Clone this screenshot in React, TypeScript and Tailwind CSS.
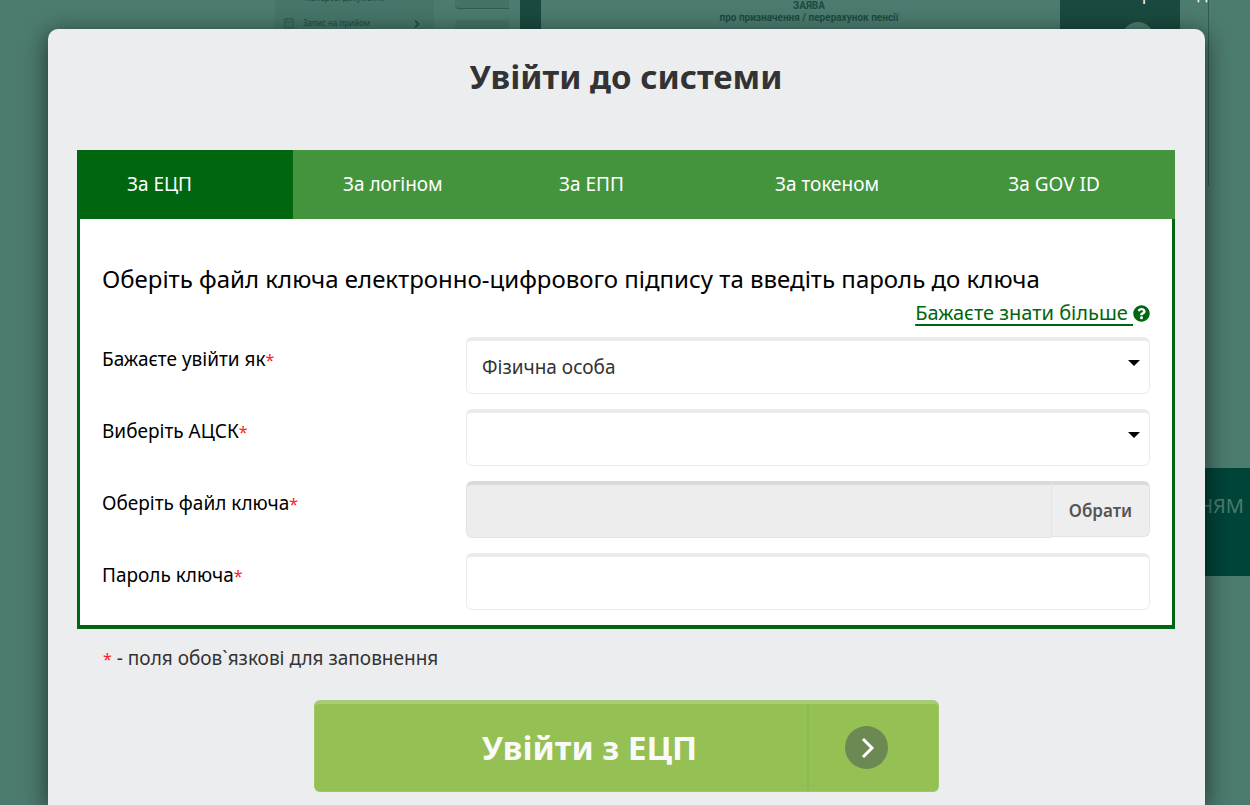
import { useState } from "react";
import type { ReactNode } from "react";
import { CalendarDays, ChevronRight } from "lucide-react";
import { FaQuestionCircle } from "react-icons/fa";

const TABS = ["За ЕЦП", "За логіном", "За ЕПП", "За токеном", "За GOV ID"];

const FIELD =
  "h-[57px] w-full appearance-none rounded-md border border-t-4 border-[#ebebeb] bg-white px-[15px] text-[19px] text-[#333] outline-none";

export default function App() {
  return (
    <div className="relative flex min-h-screen flex-col overflow-hidden bg-[#4c7b6f] pt-[29px] pr-[45px] pl-12 font-['Noto_Sans',sans-serif]">
      <PageBackdrop />
      <LoginDialog />
    </div>
  );
}

/* The dimmed page that shows around the edges of the dialog */
function PageBackdrop() {
  return (
    <div className="absolute inset-0 overflow-hidden text-[#1c4b41]" aria-hidden="true">
      <div className="absolute top-0 left-[275px] h-10 w-[159px] bg-[#47756a] text-[8px] leading-3">
        <span className="absolute -top-2 left-[30px] whitespace-nowrap">Паперові документи</span>
        <CalendarDays className="absolute top-[17px] left-2 h-3 w-3 text-[#315f54]" />
        <span className="absolute top-[17px] left-7 whitespace-nowrap">Запис на прийом</span>
        <ChevronRight className="absolute top-[18px] left-[136px] h-3 w-3" strokeWidth={3} />
      </div>
      <div className="absolute -top-4 left-[455px] h-[25px] w-[54px] rounded-l border-b border-[#2f5d51] bg-[#467368]" />
      <div className="absolute top-5 left-[455px] h-5 w-[54px] rounded-l bg-[#467368]" />
      <div className="absolute top-0 left-[520px] h-10 w-[21px] bg-[#1a4a3f]" />

      <div className="absolute top-0 left-[709px] w-[200px] text-center font-['Roboto',sans-serif] text-[10px] leading-3 font-bold">
        <p>ЗАЯВА</p>
        <p className="whitespace-nowrap">про призначення / перерахунок пенсії</p>
      </div>

      <div className="absolute top-0 left-[1060px] h-10 w-[120px] overflow-hidden bg-[#1a4a3f]">
        <div className="absolute top-[22px] left-[62px] h-8 w-8 rounded-full bg-[#4c7b6f]" />
      </div>
      <span className="absolute -top-4 left-[1106px] text-base leading-5 whitespace-nowrap text-white">
        Завершити д
      </span>
      <div className="absolute top-0 left-[1208px] h-[186px] w-px bg-[#2f5d51]" />

      <div className="absolute top-[468px] right-0 flex h-[108px] w-[200px] justify-end bg-[#004438] pt-6 pr-[6px] text-[20px] leading-7 text-[#4c7b6f]">
        НЯМ
      </div>
    </div>
  );
}

function LoginDialog() {
  const [tab, setTab] = useState(0);

  return (
    <main
      role="dialog"
      aria-labelledby="login-title"
      className="relative flex flex-1 flex-col rounded-t-[10px] bg-[#ecedef] pr-[30px] pb-[13px] pl-[29px] shadow-[0_5px_25px_rgba(0,0,0,0.6)]"
    >
      <h1
        id="login-title"
        className="pt-6 pb-[49px] text-center text-[33px] leading-[48px] font-bold text-[#333]"
      >
        Увійти до системи
      </h1>

      <div role="tablist" className="grid grid-cols-[216fr_216fr_216fr_216fr_234fr] bg-[#44943e]">
        {TABS.map((label, index) => (
          <button
            key={label}
            type="button"
            role="tab"
            aria-selected={tab === index}
            onClick={() => setTab(index)}
            className={`h-[69px] text-[19px] text-white ${
              index === TABS.length - 1 ? "pr-2 text-center" : "pl-[50px] text-left"
            } ${tab === index ? "bg-[#006610]" : ""}`}
          >
            {label}
          </button>
        ))}
      </div>

      <form id="login-form" className="border-x-[3px] border-b-4 border-[#006610] bg-white px-[22px] pt-10 pb-[15px]">
        <h2 className="text-2xl leading-10 text-black">
          Оберіть файл ключа електронно-цифрового підпису та введіть пароль до ключа
        </h2>
        <div className="mb-[10px] flex justify-end text-xl leading-7">
          <a href="#help" className="flex items-center text-[#006610]">
            <span className="whitespace-pre underline decoration-2 underline-offset-4">
              {"Бажаєте знати більше "}
            </span>
            <FaQuestionCircle className="h-[17px] w-[17px]" />
          </a>
        </div>

        <div className="flex flex-col gap-[15px]">
          <FormRow id="person" label="Бажаєте увійти як">
            <SelectBox id="person" options={["Фізична особа"]} />
          </FormRow>
          <FormRow id="authority" label="Виберіть АЦСК">
            <SelectBox id="authority" options={[""]} />
          </FormRow>
          <FormRow id="key-file" label="Оберіть файл ключа">
            <div className="flex">
              <input
                id="key-file"
                type="text"
                readOnly
                className="h-[57px] min-w-0 flex-1 rounded-l-md border border-t-4 border-[#e4e4e4] border-t-[#dadada] bg-[#ededed] px-[15px] text-[19px] outline-none"
              />
              <button
                type="button"
                className="h-14 w-[98px] rounded-r-md border border-t-4 border-l-0 border-[#e4e4e4] border-t-[#dadada] bg-[#eee] text-[17px] font-semibold text-[#555]"
              >
                Обрати
              </button>
            </div>
          </FormRow>
          <FormRow id="key-password" label="Пароль ключа">
            <input id="key-password" type="password" className={FIELD} />
          </FormRow>
        </div>
      </form>

      <p className="mt-[15px] pl-[26px] text-[19px] leading-7 text-[#333]">
        <span className="text-base text-[#ff1a1a]">*</span> - поля обов`язкові для заповнення
      </p>

      <button
        type="submit"
        form="login-form"
        className="mx-auto mt-7 flex h-[92px] w-full max-w-[625px] rounded-md border border-t-4 border-[#9cc765] border-t-[#a6cd75] bg-[#94c054]"
      >
        <span className="flex h-full flex-1 items-center justify-center pl-[58px] text-[33px] font-bold text-[#fafafa]">
          Увійти з ЕЦП
        </span>
        <span className="flex h-full w-[131px] items-center border-l-2 border-[#8cb955] pl-[36px]">
          <span className="flex h-[43px] w-[43px] items-center justify-center rounded-full bg-[#6c8853]">
            <svg viewBox="0 0 24 24" className="h-6 w-6" fill="none" stroke="#fff" strokeWidth="3">
              <path d="M9 3 18 12 9 21" />
            </svg>
          </span>
        </span>
      </button>
    </main>
  );
}

function FormRow({ id, label, children }: { id: string; label: string; children: ReactNode }) {
  return (
    <div className="grid grid-cols-[364fr_684fr]">
      <label htmlFor={id} className="pt-2 text-[19px] leading-7 text-black">
        {label}
        <span className="text-base text-[#ff1a1a]">*</span>
      </label>
      {children}
    </div>
  );
}

function SelectBox({ id, options }: { id: string; options: string[] }) {
  return (
    <div className="relative">
      <select id={id} className={FIELD}>
        {options.map((option) => (
          <option key={option}>{option}</option>
        ))}
      </select>
      <svg
        viewBox="0 0 12 6"
        className="pointer-events-none absolute top-[23px] right-[10px] h-[6px] w-3"
        aria-hidden="true"
      >
        <path d="M0 0h12L6 6z" />
      </svg>
    </div>
  );
}
